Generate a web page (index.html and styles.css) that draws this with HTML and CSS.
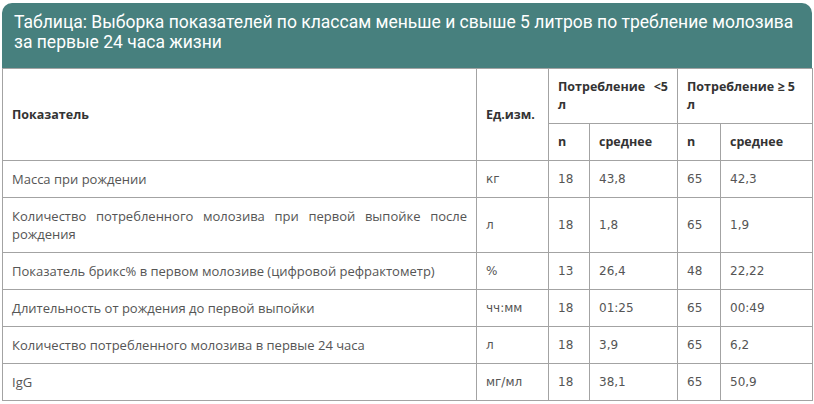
FILE: index.html
```html
<!DOCTYPE html>
<html lang="ru">
<head>
<meta charset="utf-8">
<link rel="stylesheet" href="styles.css">
</head>
<body>
<div class="wrap">
  <div class="caption">Таблица: Выборка показателей по классам меньше и свыше 5 литров по требление молозива за первые 24 часа жизни</div>
  <table class="data">
    <colgroup>
      <col class="c-name"><col class="c-unit"><col class="c-n"><col class="c-m"><col class="c-n2"><col class="c-m2">
    </colgroup>
    <thead>
      <tr>
        <th rowspan="2">Показатель</th>
        <th rowspan="2">Ед.изм.</th>
        <th colspan="2" class="j">Потребление&nbsp; &lt;5 л</th>
        <th colspan="2">Потребление ≥ 5 л</th>
      </tr>
      <tr class="sub">
        <th>n</th><th>среднее</th><th>n</th><th>среднее</th>
      </tr>
    </thead>
    <tbody>
      <tr><td class="name">Масса при рождении</td><td class="num">кг</td><td class="num">18</td><td class="num">43,8</td><td class="num">65</td><td class="num">42,3</td></tr>
      <tr><td class="name j">Количество потребленного молозива при первой выпойке после рождения</td><td class="num">л</td><td class="num">18</td><td class="num">1,8</td><td class="num">65</td><td class="num">1,9</td></tr>
      <tr><td class="name">Показатель брикс% в первом молозиве (цифровой рефрактометр)</td><td class="num">%</td><td class="num">13</td><td class="num">26,4</td><td class="num">48</td><td class="num">22,22</td></tr>
      <tr><td class="name">Длительность от рождения до первой выпойки</td><td class="num">чч:мм</td><td class="num">18</td><td class="num">01:25</td><td class="num">65</td><td class="num">00:49</td></tr>
      <tr><td class="name">Количество потребленного молозива в первые 24 часа</td><td class="num">л</td><td class="num">18</td><td class="num">3,9</td><td class="num">65</td><td class="num">6,2</td></tr>
      <tr><td class="name">IgG</td><td class="num">мг/мл</td><td class="num">18</td><td class="num">38,1</td><td class="num">65</td><td class="num">50,9</td></tr>
    </tbody>
  </table>
</div>
</body>
</html>
```
FILE: styles.css
```css
html, body { margin: 0; padding: 0; background: #fff; }
.wrap { margin: 3px 0 0 2px; width: 810px; }
.caption {
  background: #47807e;
  color: #fff;
  font-family: Roboto, "Liberation Sans", sans-serif;
  font-size: 17.5px;
  line-height: 20px;
  padding: 9px 12px 16px 12px;
  border-radius: 10px 10px 0 0;
}
.data {
  width: 810px;
  border-collapse: collapse;
  table-layout: fixed;
  font-family: "Open Sans", sans-serif;
  font-size: 13px;
  color: #555;
}
.c-name { width: 474px; }
.c-unit { width: 72px; }
.c-n { width: 41px; }
.c-m { width: 88px; }
.c-n2 { width: 43px; }
.c-m2 { width: 92px; }
.data th, .data td {
  border: 1px solid #a3a3a3;
  padding: 9px;
  line-height: 18px;
  text-align: left;
  vertical-align: middle;
}
.data th {
  font-weight: 700;
  font-size: 12.5px;
  color: #333;
}
.data .j { text-align: justify; }
.data td.num {
  font-family: "DejaVu Sans", sans-serif;
  font-size: 12px;
}
```
